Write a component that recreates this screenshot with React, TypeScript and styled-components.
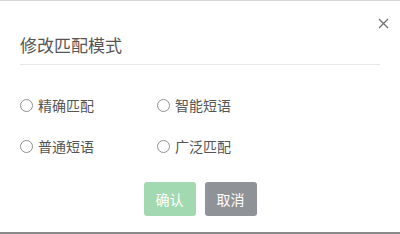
import React, { useState } from 'react';
import styled, { createGlobalStyle } from 'styled-components';

const GlobalStyle = createGlobalStyle`
    html, body {
        margin: 0;
        padding: 0;
        background: #fff;
    }
    body {
        font-family: "Noto Sans CJK SC", "Liberation Sans", sans-serif;
    }
`;

const Dialog = styled.div`
    position: relative;
    box-sizing: border-box;
    width: 400px;
    height: 234px;
    border-top: 1px solid #d6d6d6;
    border-bottom: 2px solid #8a8a8a;
    padding: 0 20px;
    display: flex;
    flex-direction: column;
`;

const Header = styled.div`
    height: 64px;
    border-bottom: 1px solid #e8e8e8;
    display: flex;
    align-items: flex-end;
    box-sizing: border-box;
    padding-bottom: 7px;
`;

const Title = styled.h3`
    margin: 0;
    font-size: 17px;
    font-weight: normal;
    color: #555;
    line-height: 24px;
`;

const CloseButton = styled.button`
    position: absolute;
    top: 15px;
    right: 10px;
    width: 14px;
    height: 14px;
    padding: 0;
    border: none;
    background: none;
    cursor: pointer;
    display: flex;
    align-items: center;
    justify-content: center;
`;

const OptionGrid = styled.div`
    display: grid;
    grid-template-columns: 137px 137px;
    row-gap: 21px;
    padding-top: 30px;
`;

const OptionLabel = styled.label`
    display: flex;
    align-items: center;
    gap: 5px;
    height: 20px;
    font-size: 14px;
    color: #555;
    cursor: pointer;
`;

const RadioCircle = styled.span<{ $checked: boolean }>`
    box-sizing: border-box;
    width: 13px;
    height: 13px;
    border-radius: 50%;
    border: 1px solid #8f8f8f;
    background: #fff;
    display: flex;
    align-items: center;
    justify-content: center;
    &::after {
        content: '';
        width: 5px;
        height: 5px;
        border-radius: 50%;
        background: #333;
        display: ${(p) => (p.$checked ? 'block' : 'none')};
    }
`;

const Footer = styled.div`
    display: flex;
    justify-content: center;
    gap: 9px;
    margin-top: 26px;
`;

const Button = styled.button<{ $variant: 'confirm' | 'cancel' }>`
    width: 52px;
    height: 34px;
    border: none;
    border-radius: 3px;
    font-family: inherit;
    font-size: 14px;
    color: #fff;
    background: ${(p) => (p.$variant === 'confirm' ? '#a3d9b0' : '#8f9297')};
    cursor: pointer;
    padding: 0;
`;

const options = ['精确匹配', '智能短语', '普通短语', '广泛匹配'];

const App = () => {
    const [selected, setSelected] = useState<string>('');

    return (
        <>
            <GlobalStyle />
            <Dialog>
                <CloseButton aria-label="close">
                    <svg width="11" height="11" viewBox="0 0 11 11">
                        <path d="M1 1 L10 10 M10 1 L1 10" stroke="#6f6f6f" strokeWidth="1.3" />
                    </svg>
                </CloseButton>
                <Header>
                    <Title>修改匹配模式</Title>
                </Header>
                <OptionGrid>
                    {options.map((name) => (
                        <OptionLabel key={name} onClick={() => setSelected(name)}>
                            <RadioCircle $checked={selected === name} />
                            {name}
                        </OptionLabel>
                    ))}
                </OptionGrid>
                <Footer>
                    <Button $variant="confirm">确认</Button>
                    <Button $variant="cancel">取消</Button>
                </Footer>
            </Dialog>
        </>
    );
};

export default App;
